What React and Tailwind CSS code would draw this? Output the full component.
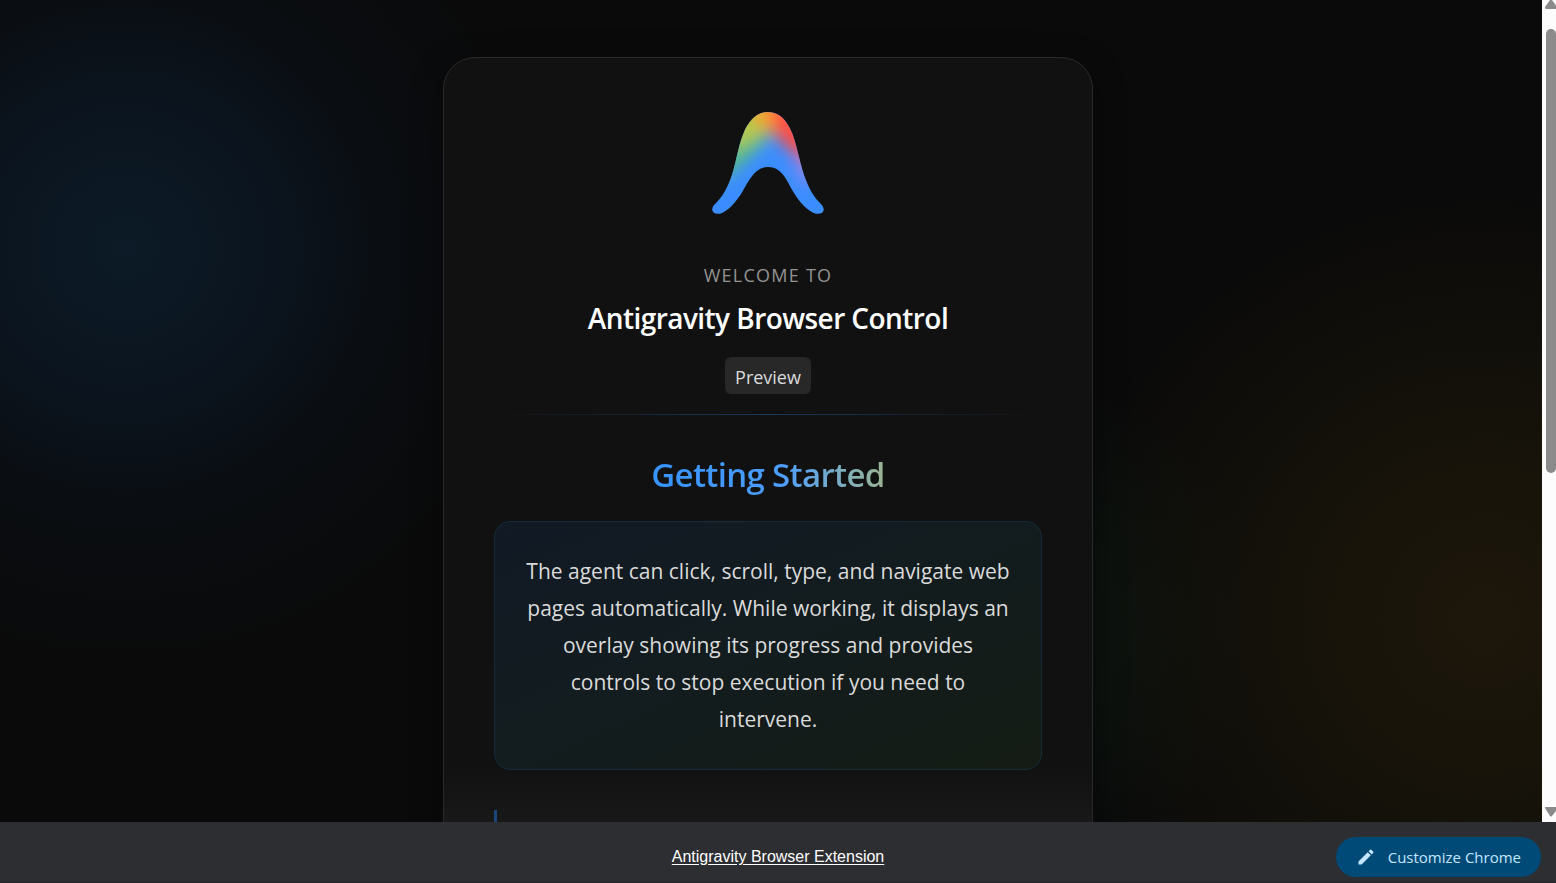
import React from "react";
import { MdEdit } from "react-icons/md";

const Logo = () => (
  <svg viewBox="0 0 360 360" className="h-[120px] w-[120px]" aria-hidden="true">
    <defs>
      <clipPath id="arch">
        <path d="M180 27 C146 27 123 52 106 92 C88 138 84 186 66 232 C54 263 41 283 24 300 C15 308 12 314 13 322 C15 331 24 334 36 332 C56 328 84 299 104 265 C122 234 140 192 180 192 C220 192 235 229 253 262 C274 299 302 328 324 332 C336 334 345 331 347 322 C348 314 344 308 336 300 C319 283 306 263 294 232 C276 186 270 138 253 92 C237 52 214 27 180 27 Z" />
      </clipPath>
      <filter id="soft" x="-60%" y="-60%" width="220%" height="220%">
        <feGaussianBlur stdDeviation="24" />
      </filter>
    </defs>
    <g clipPath="url(#arch)">
      <rect width="360" height="360" fill="#3b8dff" />
      <g filter="url(#soft)">
        <ellipse cx="300" cy="195" rx="36" ry="46" fill="#8a86e8" />
        <path d="M30 70 L200 50 L170 118 L95 190 L30 240 Z" fill="#58bd83" />
        <path d="M50 0 L190 0 L178 86 L110 128 L50 130 Z" fill="#b4c84c" />
        <path d="M118 -20 L215 -20 L205 88 L150 76 Z" fill="#f3a52c" />
        <path d="M190 -20 L360 10 L350 176 L276 168 L196 92 Z" fill="#ff4f44" />
      </g>
    </g>
  </svg>
);

const Scrollbar = () => (
  <div
    className="flex w-[14px] shrink-0 flex-col items-end overflow-hidden bg-[#fcfcfc]"
    aria-hidden="true"
  >
    <svg viewBox="0 0 11 29" className="h-[29px] w-[11px] shrink-0">
      <path d="M0 7 L5 0 Q6 -1 7 0 L12 7 Q12 9 10 9 L1 9 Q0 9 0 7 Z" fill="#8b8b8b" />
    </svg>
    <div className="h-[54%] w-[10px] rounded-full bg-[#8b8b8b]"></div>
    <svg viewBox="0 0 11 15" className="mt-auto h-[15px] w-[11px] shrink-0">
      <path d="M0 1 Q0 0 1 0 L11 0 L11 4 L7 9 Q6 10 5 9 Z" fill="#8b8b8b" />
    </svg>
  </div>
);

const Footer = () => (
  <footer className="grid h-[61px] shrink-0 grid-cols-[1fr_auto_1fr] items-center border-b border-[#222326] bg-[#2d2e32] px-[15px] pt-[10px]">
    <a
      href="#extension"
      className="col-start-2 font-['Liberation_Sans',sans-serif] text-base text-white underline underline-offset-2"
    >
      Antigravity Browser Extension
    </a>
    <button
      type="button"
      className="flex h-10 items-center gap-3 justify-self-end rounded-full bg-[#004a77] px-5 text-[15px] text-[#c2e7ff]"
    >
      <MdEdit className="text-xl" />
      Customize Chrome
    </button>
  </footer>
);

const App = () => {
  return (
    <div className="flex h-screen flex-col overflow-hidden bg-[#0a0a0a] font-['Open_Sans','Noto_Sans',sans-serif]">
      <div className="flex min-h-0 flex-1">
        <main className="flex flex-1 items-start justify-center overflow-hidden bg-[radial-gradient(circle_at_125px_248px,#0c1b27_0px,#0b141e_150px,#0a0d11_270px,#0a0a0a00_430px),radial-gradient(circle_at_1485px_619px,#1d160b_0px,#18140a_140px,#0a0a0a00_430px),radial-gradient(circle_at_1000px_628px,#0a1712_0px,#0a0a0a00_260px)] pt-[57px] pr-[6px]">
          <div className="flex h-[1400px] w-full max-w-[650px] flex-col items-center rounded-[32px] border border-[#292929] bg-[linear-gradient(to_bottom,#111111_710px,#191919_770px)] px-[50px] pt-[45px] shadow-[0_8px_32px_rgba(0,0,0,0.4)]">
            <Logo />
            <p className="mt-10 text-lg leading-6 tracking-[0.07em] text-[#949494]">
              WELCOME TO
            </p>
            <h1 className="mt-[11px] text-[28px] leading-10 font-semibold tracking-[-0.02em] text-white">
              Antigravity Browser Control
            </h1>
            <span className="mt-[19px] rounded-md bg-[#282828] px-[10px] pt-[3px] text-lg leading-[34px] text-[#dcdcdc]">
              Preview
            </span>
            <div className="mt-5 h-px w-full bg-linear-to-r from-transparent via-[#17395a] to-transparent"></div>
            <h2 className="mt-9 bg-linear-to-r from-[#3693ff] via-[#4c9dff] via-55% to-[#9bb48e] bg-clip-text text-[33px] leading-12 font-semibold tracking-[-0.02em] text-transparent">
              Getting Started
            </h2>
            <div className="mt-[22px] w-full rounded-2xl border border-[#142b3b] bg-linear-to-br from-[#111a25] via-[#131c1e] to-[#141c14] px-7 py-[31px] text-center text-[21px] leading-[37px] text-[#dadada]">
              The agent can click, scroll, type, and navigate web pages
              automatically. While working, it displays an overlay showing its
              progress and provides controls to stop execution if you need to
              intervene.
            </div>
            <div className="mt-10 h-32 w-full border-l-3 border-[#184778]"></div>
          </div>
        </main>
        <Scrollbar />
      </div>
      <Footer />
    </div>
  );
};

export default App;
